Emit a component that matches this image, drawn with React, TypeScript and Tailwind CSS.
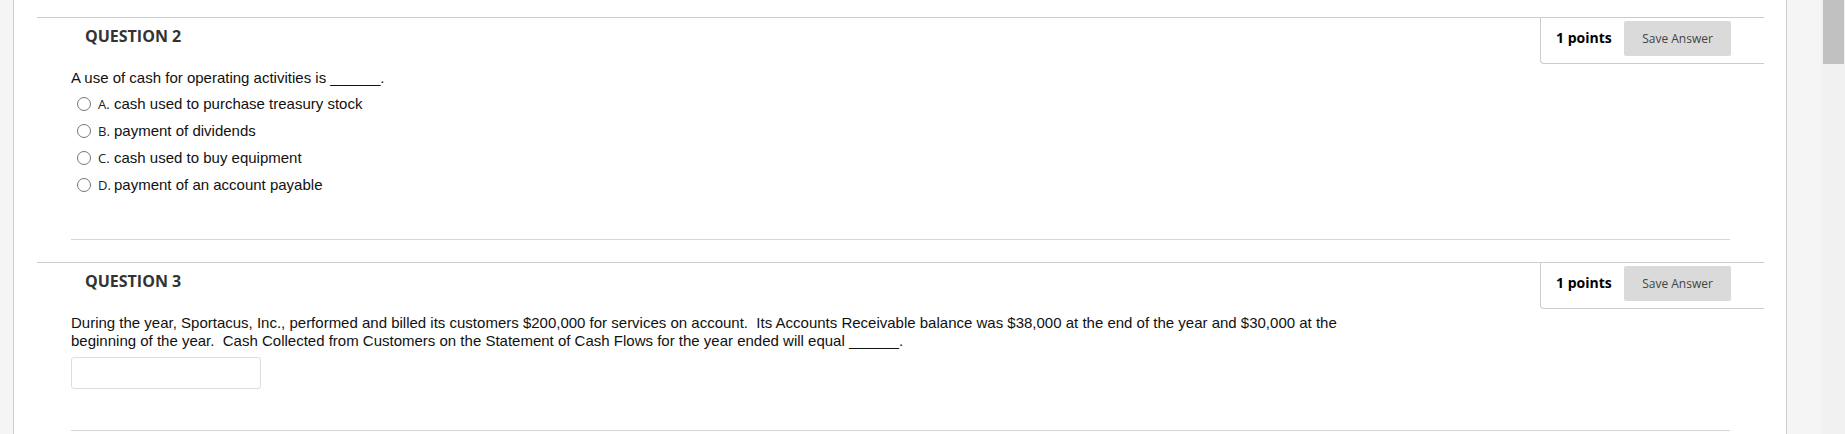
import React from 'react';

type Question = {
  number: number;
  text: string;
  options?: { letter: string; label: string }[];
};

const questions: Question[] = [
  {
    number: 2,
    text: 'A use of cash for operating activities is ______.',
    options: [
      { letter: 'A.', label: 'cash used to purchase treasury stock' },
      { letter: 'B.', label: 'payment of dividends' },
      { letter: 'C.', label: 'cash used to buy equipment' },
      { letter: 'D.', label: 'payment of an account payable' },
    ],
  },
  {
    number: 3,
    text: 'During the year, Sportacus, Inc., performed and billed its customers $200,000 for services on account.  Its Accounts Receivable balance was $38,000 at the end of the year and $30,000 at the beginning of the year.  Cash Collected from Customers on the Statement of Cash Flows for the year ended will equal ______.',
  },
];

const QuestionBlock: React.FC<{ q: Question }> = ({ q }) => {
  return (
    <li className="mt-[17px] [&+li]:mt-[22px]">
      <div className="flex justify-between border-t border-[#cccccc]">
        <h3 className="pl-[48px] pt-[7px] font-['Open_Sans',sans-serif] text-[16px] leading-[22px] font-bold text-[#333333]">
          QUESTION {q.number}
        </h3>
        <div className="flex w-[224px] items-start rounded-bl-[4px] border-b border-l border-[#cccccc] pb-[7px] pl-[15px] pt-[3px]">
          <span className="mt-[7px] w-[68px] font-['Open_Sans',sans-serif] text-[14px] leading-[19px] font-bold text-black">
            1 points
          </span>
          <button className="h-[35px] w-[107px] rounded-[2px] bg-[#dadada] font-['Open_Sans',sans-serif] text-[12px] text-[#444444]">
            Save Answer
          </button>
        </div>
      </div>
      <div className="px-[34px] pt-[5px] font-['Liberation_Sans',Arial,sans-serif] text-[15px] leading-[18px] text-[#111111]">
        <p className="max-w-[1290px] whitespace-pre-wrap">{q.text}</p>
        {q.options ? (
          <ul className="mt-[3px] pl-[6px]">
            {q.options.map((o) => (
              <li key={o.letter} className="flex h-[27px] items-center">
                <span className="h-[14px] w-[14px] rounded-full border border-[#767676] bg-white" />
                <span className="ml-[7px] w-[16px] font-['Open_Sans',sans-serif] text-[13px] text-[#222222]">
                  {o.letter}
                </span>
                <span>{o.label}</span>
              </li>
            ))}
          </ul>
        ) : (
          <input
            type="text"
            className="mt-[7px] block h-[32px] w-[190px] rounded-[3px] border border-[#dddddd] bg-white"
          />
        )}
        <div className="mt-[41px] border-t border-[#d6d6d6]" />
      </div>
    </li>
  );
};

export default function App() {
  return (
    <div className="flex h-[434px] w-full overflow-hidden bg-white">
      <div className="w-[14px] shrink-0 border-r border-[#cccccc] bg-[#f5f5f5]" />
      <main className="flex-1 pl-[23px] pr-[22px]">
        <ul>
          {questions.map((q) => (
            <QuestionBlock key={q.number} q={q} />
          ))}
        </ul>
      </main>
      <div className="w-[35px] shrink-0 border-l border-[#cccccc] bg-[#f5f5f5]" />
      <div className="w-[24px] shrink-0 bg-[#f1f1f1] pl-[2px] pr-[1px]">
        <div className="h-[64px] bg-[#c1c1c1]" />
      </div>
    </div>
  );
}
